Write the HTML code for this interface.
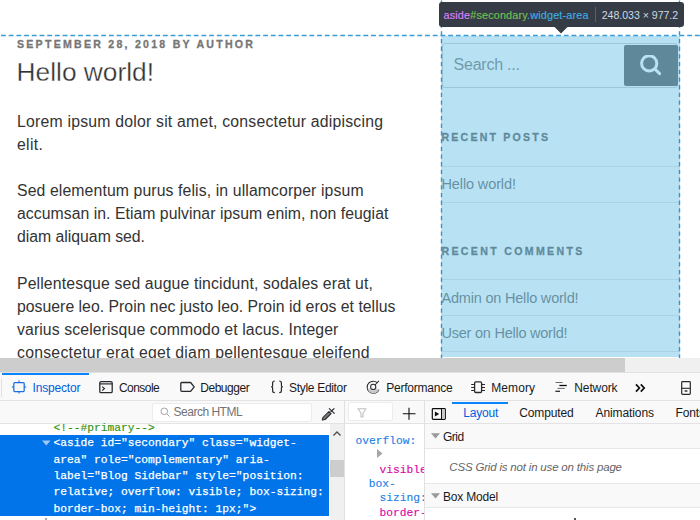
<!DOCTYPE html>
<html><head><meta charset="utf-8"><style>
html,body{margin:0;padding:0;width:700px;height:520px;overflow:hidden;background:#fff;font-family:"Liberation Sans",sans-serif}
</style></head><body>
<div style="position:absolute;left:0px;top:0px;width:700px;height:358px;background:#fff"></div>
<div style="position:absolute;left:17.00px;top:33.83px;font-family:'Liberation Sans', sans-serif;font-size:10.6px;line-height:20px;color:#767676;font-weight:bold;font-style:normal;letter-spacing:2.241px;white-space:pre;-webkit-text-stroke:0.3px #767676">SEPTEMBER 28, 2018 BY AUTHOR</div>
<div style="position:absolute;left:16.60px;top:61.59px;font-family:'Liberation Sans', sans-serif;font-size:26.3px;line-height:20px;color:#333;font-weight:normal;font-style:normal;letter-spacing:0px;white-space:pre;-webkit-text-stroke:0.3px #fff">Hello world!</div>
<div style="position:absolute;left:17.00px;top:112.13px;font-family:'Liberation Sans', sans-serif;font-size:15.8px;line-height:20px;color:#333;font-weight:normal;font-style:normal;letter-spacing:0.212px;white-space:pre;">Lorem ipsum dolor sit amet, consectetur adipiscing</div>
<div style="position:absolute;left:17.00px;top:135.13px;font-family:'Liberation Sans', sans-serif;font-size:15.8px;line-height:20px;color:#333;font-weight:normal;font-style:normal;letter-spacing:0.3px;white-space:pre;">elit.</div>
<div style="position:absolute;left:17.00px;top:181.43px;font-family:'Liberation Sans', sans-serif;font-size:15.8px;line-height:20px;color:#333;font-weight:normal;font-style:normal;letter-spacing:0.109px;white-space:pre;">Sed elementum purus felis, in ullamcorper ipsum</div>
<div style="position:absolute;left:17.00px;top:204.43px;font-family:'Liberation Sans', sans-serif;font-size:15.8px;line-height:20px;color:#333;font-weight:normal;font-style:normal;letter-spacing:0.034px;white-space:pre;">accumsan in. Etiam pulvinar ipsum enim, non feugiat</div>
<div style="position:absolute;left:17.00px;top:227.43px;font-family:'Liberation Sans', sans-serif;font-size:15.8px;line-height:20px;color:#333;font-weight:normal;font-style:normal;letter-spacing:-0.013px;white-space:pre;">diam aliquam sed.</div>
<div style="position:absolute;left:17.00px;top:273.93px;font-family:'Liberation Sans', sans-serif;font-size:15.8px;line-height:20px;color:#333;font-weight:normal;font-style:normal;letter-spacing:0.131px;white-space:pre;">Pellentesque sed augue tincidunt, sodales erat ut,</div>
<div style="position:absolute;left:17.00px;top:296.93px;font-family:'Liberation Sans', sans-serif;font-size:15.8px;line-height:20px;color:#333;font-weight:normal;font-style:normal;letter-spacing:0.014px;white-space:pre;">posuere leo. Proin nec justo leo. Proin id eros et tellus</div>
<div style="position:absolute;left:17.00px;top:319.93px;font-family:'Liberation Sans', sans-serif;font-size:15.8px;line-height:20px;color:#333;font-weight:normal;font-style:normal;letter-spacing:0.102px;white-space:pre;">varius scelerisque commodo et lacus. Integer</div>
<div style="position:absolute;left:17.00px;top:342.93px;font-family:'Liberation Sans', sans-serif;font-size:15.8px;line-height:20px;color:#333;font-weight:normal;font-style:normal;letter-spacing:0.251px;white-space:pre;">consectetur erat eget diam pellentesque eleifend</div>
<div style="position:absolute;left:442px;top:43px;width:236px;height:45px;box-sizing:border-box;border:1px solid #bbb;border-radius:3px;background:#fff"></div>
<div style="position:absolute;left:453.50px;top:54.76px;font-family:'Liberation Sans', sans-serif;font-size:16px;line-height:20px;color:#4b4b4b;font-weight:normal;font-style:normal;letter-spacing:-0.22px;white-space:pre;">Search ...</div>
<div style="position:absolute;left:624px;top:45px;width:54px;height:41px;background:#222;border-radius:2px"></div>
<svg style="position:absolute;left:640px;top:55px" width="22" height="22" viewBox="0 0 22 22"><circle cx="9.2" cy="8.4" r="7.6" fill="none" stroke="#fff" stroke-width="3"/><line x1="15" y1="14.2" x2="19.6" y2="18.6" stroke="#fff" stroke-width="3" stroke-linecap="round"/></svg>
<div style="position:absolute;left:441.50px;top:127.23px;font-family:'Liberation Sans', sans-serif;font-size:10.6px;line-height:20px;color:#222;font-weight:bold;font-style:normal;letter-spacing:2.19px;white-space:pre;-webkit-text-stroke:0.3px #222">RECENT POSTS</div>
<div style="position:absolute;left:441px;top:166px;width:239px;height:1px;background:#ddd"></div>
<div style="position:absolute;left:441.50px;top:173.58px;font-family:'Liberation Sans', sans-serif;font-size:14.5px;line-height:20px;color:#333;font-weight:normal;font-style:normal;letter-spacing:-0.118px;white-space:pre;">Hello world!</div>
<div style="position:absolute;left:441px;top:202px;width:239px;height:1px;background:#ddd"></div>
<div style="position:absolute;left:441.50px;top:241.13px;font-family:'Liberation Sans', sans-serif;font-size:10.6px;line-height:20px;color:#222;font-weight:bold;font-style:normal;letter-spacing:2.32px;white-space:pre;-webkit-text-stroke:0.3px #222">RECENT COMMENTS</div>
<div style="position:absolute;left:441px;top:279px;width:239px;height:1px;background:#ddd"></div>
<div style="position:absolute;left:441.50px;top:287.78px;font-family:'Liberation Sans', sans-serif;font-size:14.5px;line-height:20px;color:#333;font-weight:normal;font-style:normal;letter-spacing:-0.2px;white-space:pre;">Admin on Hello world!</div>
<div style="position:absolute;left:441px;top:315px;width:239px;height:1px;background:#ddd"></div>
<div style="position:absolute;left:441.50px;top:323.48px;font-family:'Liberation Sans', sans-serif;font-size:14.5px;line-height:20px;color:#333;font-weight:normal;font-style:normal;letter-spacing:-0.237px;white-space:pre;">User on Hello world!</div>
<div style="position:absolute;left:441px;top:351px;width:239px;height:1px;background:#ddd"></div>
<div style="position:absolute;left:441px;top:36px;width:239px;height:321px;background:rgba(137,207,235,0.6)"></div>
<svg style="position:absolute;left:0;top:0" width="700" height="358"><line x1="1" y1="35.5" x2="700" y2="35.5" stroke="#3a9cd8" stroke-width="1.4" stroke-dasharray="4.82 2.89"/><line x1="441.5" y1="0" x2="441.5" y2="358" stroke="#2c96d6" stroke-width="1.4" stroke-dasharray="4.3 3.4" stroke-dashoffset="-0.4"/><line x1="679.5" y1="0" x2="679.5" y2="358" stroke="#2c96d6" stroke-width="1.4" stroke-dasharray="4.3 3.4" stroke-dashoffset="-0.4"/></svg>
<div style="position:absolute;left:439px;top:2px;width:244.5px;height:24.5px;box-sizing:border-box;background:#353c46;border-radius:3px"></div>
<svg style="position:absolute;left:553px;top:26px" width="16" height="9"><polygon points="0.5,0 15.5,0 8,7.6" fill="#353c46"/></svg>
<div style="position:absolute;left:443.50px;top:5.16px;font-family:'Liberation Sans', sans-serif;font-size:10.8px;line-height:20px;color:#fff;font-weight:normal;font-style:normal;letter-spacing:0.181px;white-space:pre;-webkit-text-stroke-width:0.15px"><span style="color:#df80ff">aside</span><span style="color:#72c054">#secondary</span><span style="color:#40ace2">.widget-area</span></div>
<div style="position:absolute;left:595px;top:7px;width:1px;height:15px;background:#5a6169"></div>
<div style="position:absolute;left:601.70px;top:5.23px;font-family:'Liberation Sans', sans-serif;font-size:10.6px;line-height:20px;color:#cdd9e4;font-weight:normal;font-style:normal;letter-spacing:-0.029px;white-space:pre;">248.033 × 977.2</div>
<div style="position:absolute;left:0px;top:358px;width:700px;height:14px;background:#f0f0f0"></div>
<div style="position:absolute;left:0px;top:358px;width:625px;height:14px;background:#cdcdcd"></div>
<div style="position:absolute;left:0px;top:372px;width:700px;height:148px;background:#fff"></div>
<div style="position:absolute;left:0px;top:372px;width:700px;height:1px;background:#e0e0e2"></div>
<div style="position:absolute;left:0px;top:373px;width:700px;height:27px;background:#f9f9fa"></div>
<div style="position:absolute;left:0px;top:400px;width:700px;height:1px;background:#e3e3e5"></div>
<div style="position:absolute;left:1px;top:378px;width:1px;height:19px;background:#e0e0e2"></div>
<div style="position:absolute;left:2px;top:373px;width:87px;height:2px;background:#0a84ff"></div>
<div style="position:absolute;left:32.50px;top:377.84px;font-family:'Liberation Sans', sans-serif;font-size:12px;line-height:20px;color:#0060df;font-weight:normal;font-style:normal;letter-spacing:-0.175px;white-space:pre;">Inspector</div>
<div style="position:absolute;left:119.00px;top:377.84px;font-family:'Liberation Sans', sans-serif;font-size:12px;line-height:20px;color:#18191a;font-weight:normal;font-style:normal;letter-spacing:-0.55px;white-space:pre;">Console</div>
<div style="position:absolute;left:200.20px;top:377.84px;font-family:'Liberation Sans', sans-serif;font-size:12px;line-height:20px;color:#18191a;font-weight:normal;font-style:normal;letter-spacing:-0.443px;white-space:pre;">Debugger</div>
<div style="position:absolute;left:289.10px;top:377.84px;font-family:'Liberation Sans', sans-serif;font-size:12px;line-height:20px;color:#18191a;font-weight:normal;font-style:normal;letter-spacing:-0.318px;white-space:pre;">Style Editor</div>
<div style="position:absolute;left:386.20px;top:377.84px;font-family:'Liberation Sans', sans-serif;font-size:12px;line-height:20px;color:#18191a;font-weight:normal;font-style:normal;letter-spacing:-0.23px;white-space:pre;">Performance</div>
<div style="position:absolute;left:491.30px;top:377.84px;font-family:'Liberation Sans', sans-serif;font-size:12px;line-height:20px;color:#18191a;font-weight:normal;font-style:normal;letter-spacing:0.06px;white-space:pre;">Memory</div>
<div style="position:absolute;left:574.30px;top:377.84px;font-family:'Liberation Sans', sans-serif;font-size:12px;line-height:20px;color:#18191a;font-weight:normal;font-style:normal;letter-spacing:-0.117px;white-space:pre;">Network</div>
<svg style="position:absolute;left:10px;top:379px" width="18" height="16" viewBox="0 0 18 16"><rect x="3.8" y="3.5" width="10.4" height="9" rx="1" fill="none" stroke="#1a6ee0" stroke-width="1.25"/><line x1="9" y1="1.6" x2="9" y2="3.5" stroke="#1a6ee0" stroke-width="1.1"/><line x1="9" y1="12.5" x2="9" y2="14.4" stroke="#1a6ee0" stroke-width="1.1"/><line x1="1.8" y1="8" x2="3.8" y2="8" stroke="#1a6ee0" stroke-width="1.1"/><line x1="14.2" y1="8" x2="16.2" y2="8" stroke="#1a6ee0" stroke-width="1.1"/></svg>
<svg style="position:absolute;left:97px;top:379px" width="18" height="16" viewBox="0 0 18 16"><rect x="2.8" y="2.7" width="12.4" height="11" rx="1.3" fill="none" stroke="#2a2a2e" stroke-width="1.3"/><line x1="2.8" y1="4.9" x2="15.2" y2="4.9" stroke="#2a2a2e" stroke-width="1.2"/><polyline points="5.2,7.6 7.4,9.5 5.2,11.6" fill="none" stroke="#2a2a2e" stroke-width="1.2"/></svg>
<svg style="position:absolute;left:178px;top:379px" width="20" height="16" viewBox="0 0 20 16"><path d="M3.8,3.5 L12.6,3.5 L16.2,7.9 L12.6,12.3 L3.8,12.3 Q2.8,12.3 2.8,11.3 L2.8,4.5 Q2.8,3.5 3.8,3.5 Z" fill="none" stroke="#2a2a2e" stroke-width="1.3" stroke-linejoin="round"/></svg>
<svg style="position:absolute;left:266px;top:378px" width="24" height="20" viewBox="0 0 24 20"><path d="M8.8,3 Q6.6,3 6.6,5 V7.8 Q6.6,8.8 5.2,8.8 Q6.6,8.8 6.6,9.8 V12.8 Q6.6,14.7 8.8,14.7" fill="none" stroke="#2a2a2e" stroke-width="1.2"/><path d="M13.2,3 Q15.4,3 15.4,5 V7.8 Q15.4,8.8 16.8,8.8 Q15.4,8.8 15.4,9.8 V12.8 Q15.4,14.7 13.2,14.7" fill="none" stroke="#2a2a2e" stroke-width="1.2"/></svg>
<svg style="position:absolute;left:365px;top:379px" width="16" height="16" viewBox="0 0 16 16"><path d="M8.2,14.2 A6,6 0 0 1 8.2,2.2" fill="none" stroke="#2a2a2e" stroke-width="1.05"/><path d="M8.2,2.2 A6,6 0 0 1 12.2,3.6" fill="none" stroke="#2a2a2e" stroke-width="1.05"/><path d="M8.2,14.2 A6,6 0 0 0 14,10.6" fill="none" stroke="#2a2a2e" stroke-width="1.05"/><path d="M2.6,9.5 A6,6 0 0 0 14,10.6 L11,9.3 A3,3 0 0 1 5.3,9.5 Z" fill="#c8c8ca"/><circle cx="8.2" cy="7.9" r="2.6" fill="none" stroke="#2a2a2e" stroke-width="1.05"/><line x1="10" y1="6" x2="13.9" y2="1.9" stroke="#2a2a2e" stroke-width="1.05"/></svg>
<svg style="position:absolute;left:469px;top:379px" width="18" height="16" viewBox="0 0 18 16"><rect x="5.6" y="2.8" width="7" height="10.7" rx="1.2" fill="none" stroke="#2a2a2e" stroke-width="1.3"/><path d="M2.2,5.5 H5.2 M2.2,8.5 H5.2 M2.2,11.5 H5.2 M13,5.5 H16 M13,8.5 H16 M13,11.5 H16" stroke="#2a2a2e" stroke-width="1"/></svg>
<svg style="position:absolute;left:553px;top:379px" width="16" height="16" viewBox="0 0 16 16"><path d="M2.6,3.5 H9.6" stroke="#6a6a6e" stroke-width="1"/><path d="M6.4,6.5 H13.8" stroke="#0c0c0d" stroke-width="1.3"/><path d="M4.5,9.4 H11.8" stroke="#6a6a6e" stroke-width="1"/><path d="M2.4,12.3 H7" stroke="#2a2a2e" stroke-width="1.3"/></svg>
<svg style="position:absolute;left:634px;top:382px" width="14" height="12" viewBox="0 0 14 12"><polyline points="2,2.3 5.4,6 2,9.7" fill="none" stroke="#0c0c0d" stroke-width="1.7"/><polyline points="6.8,2.3 10.2,6 6.8,9.7" fill="none" stroke="#0c0c0d" stroke-width="1.7"/></svg>
<svg style="position:absolute;left:679px;top:380px" width="14" height="16" viewBox="0 0 14 16"><rect x="2.7" y="1.7" width="8.6" height="12.6" rx="0.8" fill="none" stroke="#2a2a2e" stroke-width="1.2"/><line x1="2.7" y1="8.3" x2="11.3" y2="8.3" stroke="#2a2a2e" stroke-width="1.1"/><ellipse cx="7" cy="11" rx="1.7" ry="1.1" fill="#555"/></svg>
<div style="position:absolute;left:0px;top:401px;width:700px;height:22px;background:#f9f9fa"></div>
<div style="position:absolute;left:0px;top:423px;width:700px;height:1px;background:#e3e3e5"></div>
<div style="position:absolute;left:152px;top:402.5px;width:160px;height:19px;box-sizing:border-box;background:#fff;border:1px solid #ececee;border-radius:2px"></div>
<svg style="position:absolute;left:159px;top:406px" width="13" height="13" viewBox="0 0 13 13"><circle cx="5.3" cy="5.3" r="3.3" fill="none" stroke="#a4a4a6" stroke-width="1"/><line x1="7.8" y1="7.8" x2="10.6" y2="10.6" stroke="#a4a4a6" stroke-width="1"/></svg>
<div style="position:absolute;left:173.60px;top:402.34px;font-family:'Liberation Sans', sans-serif;font-size:12px;line-height:20px;color:#737373;font-weight:normal;font-style:normal;letter-spacing:-0.5px;white-space:pre;">Search HTML</div>
<svg style="position:absolute;left:316px;top:402px" width="24" height="22" viewBox="0 0 24 22"><path d="M6.3,18.1 L6.9,15.5 L12.9,9.5 L15.1,11.7 L9.1,17.5 Z" fill="#7a7a7c" stroke="#2a2a2e" stroke-width="1.05" stroke-linejoin="round"/><line x1="13" y1="6.4" x2="18.6" y2="11.6" stroke="#2a2a2e" stroke-width="1.2"/><line x1="14.6" y1="9.7" x2="18.4" y2="6.4" stroke="#2a2a2e" stroke-width="1.2"/></svg>
<div style="position:absolute;left:344px;top:400px;width:1px;height:120px;background:#e0e0e2"></div>
<div style="position:absolute;left:424px;top:400px;width:1px;height:120px;background:#e0e0e2"></div>
<div style="position:absolute;left:348.3px;top:402.2px;width:44.4px;height:19.2px;box-sizing:border-box;background:#fff;border:1px solid #ececee;border-radius:2px"></div>
<svg style="position:absolute;left:356px;top:407px" width="12" height="12" viewBox="0 0 12 12"><path d="M2,1.8 H10 L7,6 V10 H5 V6 Z" fill="none" stroke="#c0c0c2" stroke-width="1.1" stroke-linejoin="round"/></svg>
<svg style="position:absolute;left:401px;top:406px" width="16" height="16" viewBox="0 0 16 16"><path d="M8,1.8 V13.8 M1.8,7.8 H14.5" stroke="#0c0c0d" stroke-width="1.1"/></svg>
<svg style="position:absolute;left:430px;top:406px" width="18" height="16" viewBox="0 0 18 16"><rect x="2.3" y="2.7" width="13" height="10.6" rx="0.8" fill="none" stroke="#0c0c0d" stroke-width="1.2"/><polygon points="4.9,5.6 9.2,8 4.9,10.4" fill="#0c0c0d"/><rect x="12" y="3.2" width="2.8" height="9.6" fill="#cacacc"/><line x1="11.5" y1="2.7" x2="11.5" y2="13.3" stroke="#0c0c0d" stroke-width="1"/></svg>
<div style="position:absolute;left:452.4px;top:401.5px;width:56px;height:2px;background:#0a84ff"></div>
<div style="position:absolute;left:463.20px;top:402.84px;font-family:'Liberation Sans', sans-serif;font-size:12px;line-height:20px;color:#0060df;font-weight:normal;font-style:normal;letter-spacing:-0.16px;white-space:pre;">Layout</div>
<div style="position:absolute;left:519.20px;top:402.84px;font-family:'Liberation Sans', sans-serif;font-size:12px;line-height:20px;color:#18191a;font-weight:normal;font-style:normal;letter-spacing:-0.129px;white-space:pre;">Computed</div>
<div style="position:absolute;left:595.60px;top:402.84px;font-family:'Liberation Sans', sans-serif;font-size:12px;line-height:20px;color:#18191a;font-weight:normal;font-style:normal;letter-spacing:-0.111px;white-space:pre;">Animations</div>
<div style="position:absolute;left:675.60px;top:402.84px;font-family:'Liberation Sans', sans-serif;font-size:12px;line-height:20px;color:#18191a;font-weight:normal;font-style:normal;letter-spacing:-0.15px;white-space:pre;">Fonts</div>
<div style="position:absolute;left:53.40px;top:417.60px;font-family:'Liberation Mono', monospace;font-size:11.25px;line-height:20px;color:#2f9410;font-weight:normal;font-style:normal;letter-spacing:0px;white-space:pre;-webkit-text-stroke:0.15px #2f9410">&lt;!--#primary--&gt;</div>
<div style="position:absolute;left:0px;top:435px;width:329px;height:81px;background:#0074e8"></div>
<svg style="position:absolute;left:41px;top:440px" width="11" height="7"><polygon points="1,0.6 9.6,0.6 5.3,5.6" fill="#9fc8f6"/></svg>
<div style="position:absolute;left:53.60px;top:433.40px;font-family:'Liberation Mono', monospace;font-size:11.25px;line-height:20px;color:#fff;font-weight:normal;font-style:normal;letter-spacing:0px;white-space:pre;-webkit-text-stroke:0.25px #fff">&lt;aside id="secondary" class="widget-</div>
<div style="position:absolute;left:53.60px;top:449.75px;font-family:'Liberation Mono', monospace;font-size:11.25px;line-height:20px;color:#fff;font-weight:normal;font-style:normal;letter-spacing:0px;white-space:pre;-webkit-text-stroke:0.25px #fff">area" role="complementary" aria-</div>
<div style="position:absolute;left:53.60px;top:466.10px;font-family:'Liberation Mono', monospace;font-size:11.25px;line-height:20px;color:#fff;font-weight:normal;font-style:normal;letter-spacing:0px;white-space:pre;-webkit-text-stroke:0.25px #fff">label="Blog Sidebar" style="position:</div>
<div style="position:absolute;left:53.60px;top:482.45px;font-family:'Liberation Mono', monospace;font-size:11.25px;line-height:20px;color:#fff;font-weight:normal;font-style:normal;letter-spacing:0px;white-space:pre;-webkit-text-stroke:0.25px #fff">relative; overflow: visible; box-sizing:</div>
<div style="position:absolute;left:53.60px;top:498.80px;font-family:'Liberation Mono', monospace;font-size:11.25px;line-height:20px;color:#fff;font-weight:normal;font-style:normal;letter-spacing:0px;white-space:pre;-webkit-text-stroke:0.25px #fff">border-box; min-height: 1px;"&gt;</div>
<div style="position:absolute;left:330px;top:424px;width:14px;height:96px;background:#f0f0f0"></div>
<div style="position:absolute;left:330px;top:460px;width:14px;height:16.5px;background:#cdcdcd"></div>
<svg style="position:absolute;left:331px;top:429px" width="12" height="10"><polyline points="2.5,6.5 6,3 9.5,6.5" fill="none" stroke="#505050" stroke-width="1.4"/></svg>
<div style="position:absolute;left:345px;top:424px;width:79px;height:96px;overflow:hidden">
<div style="position:absolute;left:10.60px;top:6.80px;font-family:'Liberation Mono', monospace;font-size:11.25px;line-height:20px;color:#1a7ee8;font-weight:normal;font-style:normal;letter-spacing:0px;white-space:pre;-webkit-text-stroke:0.12px #1a7ee8">overflow:</div>
<svg style="position:absolute;left:31px;top:24px" width="8" height="11"><polygon points="1,1 6.5,5.5 1,10" fill="#a6a6a8"/></svg>
<div style="position:absolute;left:34.60px;top:36.00px;font-family:'Liberation Mono', monospace;font-size:11.25px;line-height:20px;color:#dd00a9;font-weight:normal;font-style:normal;letter-spacing:0px;white-space:pre;-webkit-text-stroke:0.12px #dd00a9">visible</div>
<div style="position:absolute;left:23.80px;top:49.70px;font-family:'Liberation Mono', monospace;font-size:11.25px;line-height:20px;color:#1a7ee8;font-weight:normal;font-style:normal;letter-spacing:0px;white-space:pre;-webkit-text-stroke:0.12px #1a7ee8">box-</div>
<div style="position:absolute;left:34.60px;top:64.20px;font-family:'Liberation Mono', monospace;font-size:11.25px;line-height:20px;color:#1a7ee8;font-weight:normal;font-style:normal;letter-spacing:0px;white-space:pre;-webkit-text-stroke:0.12px #1a7ee8">sizing:</div>
<div style="position:absolute;left:34.60px;top:79.00px;font-family:'Liberation Mono', monospace;font-size:11.25px;line-height:20px;color:#dd00a9;font-weight:normal;font-style:normal;letter-spacing:0px;white-space:pre;-webkit-text-stroke:0.12px #dd00a9">border-</div>
</div>
<div style="position:absolute;left:425px;top:424px;width:275px;height:24px;background:#f9f9fa"></div>
<div style="position:absolute;left:425px;top:448px;width:275px;height:1px;background:#e8e8ea"></div>
<svg style="position:absolute;left:430px;top:432px" width="11" height="8"><polygon points="1,1.2 10,1.2 5.5,6.6" fill="#9a9a9c"/></svg>
<div style="position:absolute;left:442.90px;top:426.74px;font-family:'Liberation Sans', sans-serif;font-size:12px;line-height:20px;color:#18191a;font-weight:normal;font-style:normal;letter-spacing:-0.5px;white-space:pre;">Grid</div>
<div style="position:absolute;left:449.30px;top:457.02px;font-family:'Liberation Sans', sans-serif;font-size:11.5px;line-height:20px;color:#656565;font-weight:normal;font-style:italic;letter-spacing:-0.185px;white-space:pre;">CSS Grid is not in use on this page</div>
<div style="position:absolute;left:425px;top:483px;width:275px;height:1px;background:#e8e8ea"></div>
<div style="position:absolute;left:425px;top:483.5px;width:275px;height:24px;background:#f9f9fa"></div>
<div style="position:absolute;left:425px;top:507px;width:275px;height:1px;background:#e8e8ea"></div>
<svg style="position:absolute;left:430px;top:492px" width="11" height="8"><polygon points="1,1.2 10,1.2 5.5,6.6" fill="#9a9a9c"/></svg>
<div style="position:absolute;left:443.00px;top:486.84px;font-family:'Liberation Sans', sans-serif;font-size:12px;line-height:20px;color:#18191a;font-weight:normal;font-style:normal;letter-spacing:-0.188px;white-space:pre;">Box Model</div>
<div style="position:absolute;left:574px;top:517.5px;width:1.5px;height:2.5px;background:#555"></div>
<div style="position:absolute;left:45px;top:518px;width:2px;height:2px;background:#aaa"></div>
</body></html>
